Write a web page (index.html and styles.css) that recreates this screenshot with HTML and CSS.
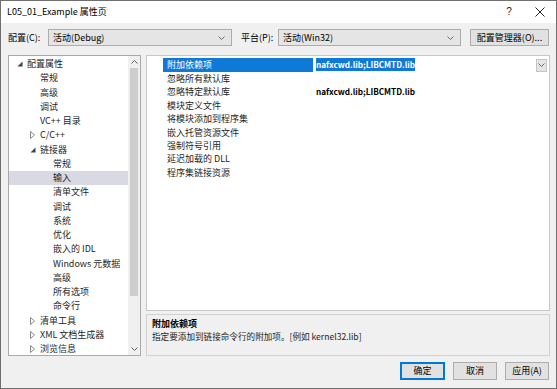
FILE: index.html
```html
<!DOCTYPE html>
<html lang="zh-CN">
<head>
<meta charset="utf-8">
<title>L05_01_Example 属性页</title>
<link rel="stylesheet" href="styles.css">
</head>
<body>
<div class="window">
  <div class="titlebar">
    <span class="title">L05_01_Example 属性页</span>
    <span class="help">?</span>
    <span class="close"><svg width="10" height="10" viewBox="0 0 10 10"><path d="M0.5 0.5L9.5 9.5M9.5 0.5L0.5 9.5" stroke="#222" stroke-width="1" fill="none"/></svg></span>
  </div>

  <div class="config-row">
    <span class="label label-config">配置(C):</span>
    <div class="combo combo-config"><span class="combo-text">活动(Debug)</span><svg class="chev" width="7" height="4" viewBox="0 0 7 4"><path d="M0.5 0.5L3.5 3.5L6.5 0.5" stroke="#6a6a6a" fill="none"/></svg></div>
    <span class="label label-platform">平台(P):</span>
    <div class="combo combo-platform"><span class="combo-text">活动(Win32)</span><svg class="chev" width="7" height="4" viewBox="0 0 7 4"><path d="M0.5 0.5L3.5 3.5L6.5 0.5" stroke="#6a6a6a" fill="none"/></svg></div>
    <div class="btn btn-manager">配置管理器(O)...</div>
  </div>

  <div class="main">
    <div class="tree">
      <ul class="tree-list">
        <li class="node l0"><span class="tog"><svg width="6" height="6" viewBox="0 0 6 6"><path d="M5.5 0.5V5.5H0.5Z" fill="#404040"/></svg></span>配置属性</li>
        <li class="node l1"><span class="tog"></span>常规</li>
        <li class="node l1"><span class="tog"></span>高级</li>
        <li class="node l1"><span class="tog"></span>调试</li>
        <li class="node l1"><span class="tog"></span>VC++ 目录</li>
        <li class="node l1"><span class="tog"><svg width="6" height="8" viewBox="0 0 6 8"><path d="M0.5 0.5L4.5 4L0.5 7.5Z" fill="none" stroke="#8a8a8a"/></svg></span>C/C++</li>
        <li class="node l1"><span class="tog"><svg width="6" height="6" viewBox="0 0 6 6"><path d="M5.5 0.5V5.5H0.5Z" fill="#404040"/></svg></span>链接器</li>
        <li class="node l2"><span class="tog"></span>常规</li>
        <li class="node l2 selected"><span class="tog"></span>输入</li>
        <li class="node l2"><span class="tog"></span>清单文件</li>
        <li class="node l2"><span class="tog"></span>调试</li>
        <li class="node l2"><span class="tog"></span>系统</li>
        <li class="node l2"><span class="tog"></span>优化</li>
        <li class="node l2"><span class="tog"></span>嵌入的 IDL</li>
        <li class="node l2"><span class="tog"></span>Windows 元数据</li>
        <li class="node l2"><span class="tog"></span>高级</li>
        <li class="node l2"><span class="tog"></span>所有选项</li>
        <li class="node l2"><span class="tog"></span>命令行</li>
        <li class="node l1"><span class="tog"><svg width="6" height="8" viewBox="0 0 6 8"><path d="M0.5 0.5L4.5 4L0.5 7.5Z" fill="none" stroke="#8a8a8a"/></svg></span>清单工具</li>
        <li class="node l1"><span class="tog"><svg width="6" height="8" viewBox="0 0 6 8"><path d="M0.5 0.5L4.5 4L0.5 7.5Z" fill="none" stroke="#8a8a8a"/></svg></span>XML 文档生成器</li>
        <li class="node l1"><span class="tog"><svg width="6" height="8" viewBox="0 0 6 8"><path d="M0.5 0.5L4.5 4L0.5 7.5Z" fill="none" stroke="#8a8a8a"/></svg></span>浏览信息</li>
      </ul>
      <div class="scrollbar">
        <div class="sb-arrow"><svg width="7" height="4" viewBox="0 0 7 4"><path d="M0.5 3.5L3.5 0.5L6.5 3.5" stroke="#606060" fill="none"/></svg></div>
        <div class="sb-track"><div class="sb-thumb"></div></div>
        <div class="sb-arrow"><svg width="7" height="4" viewBox="0 0 7 4"><path d="M0.5 0.5L3.5 3.5L6.5 0.5" stroke="#606060" fill="none"/></svg></div>
      </div>
    </div>

    <div class="right">
      <div class="grid">
        <div class="row row-active">
          <span class="name name-selected">附加依赖项</span>
          <span class="value"><span class="sel-text">nafxcwd.lib;LIBCMTD.lib</span></span>
          <span class="dd"><svg width="7" height="4" viewBox="0 0 7 4"><path d="M0.5 0.5L3.5 3.5L6.5 0.5" stroke="#6a6a6a" fill="none"/></svg></span>
        </div>
        <div class="row"><span class="name">忽略所有默认库</span><span class="value"></span></div>
        <div class="row"><span class="name">忽略特定默认库</span><span class="value">nafxcwd.lib;LIBCMTD.lib</span></div>
        <div class="row"><span class="name">模块定义文件</span><span class="value"></span></div>
        <div class="row"><span class="name">将模块添加到程序集</span><span class="value"></span></div>
        <div class="row"><span class="name">嵌入托管资源文件</span><span class="value"></span></div>
        <div class="row"><span class="name">强制符号引用</span><span class="value"></span></div>
        <div class="row"><span class="name">延迟加载的 DLL</span><span class="value"></span></div>
        <div class="row"><span class="name">程序集链接资源</span><span class="value"></span></div>
      </div>
      <div class="desc">
        <div class="desc-title">附加依赖项</div>
        <div class="desc-text">指定要添加到链接命令行的附加项。[例如 kernel32.lib]</div>
      </div>
    </div>
  </div>

  <div class="buttons">
    <div class="btn btn-ok">确定</div>
    <div class="btn btn-cancel">取消</div>
    <div class="btn btn-apply">应用(A)</div>
  </div>
</div>
</body>
</html>
```

FILE: styles.css
```css
* { box-sizing: border-box; }

html, body {
  margin: 0;
  padding: 0;
}

body {
  width: 557px;
  height: 389px;
  overflow: hidden;
  background: #f0f0f0;
  font-family: "Noto Sans CJK SC", "Noto Sans", sans-serif;
  font-size: 9px;
  color: #000;
}

.window {
  width: 557px;
  height: 389px;
  border: 1px solid #6f6f6f;
  background: #f0f0f0;
  display: flex;
  flex-direction: column;
}

/* title bar */
.titlebar {
  flex: none;
  height: 22px;
  background: #fff;
  display: flex;
  align-items: center;
  padding-left: 6px;
}

.title {
  flex: 1;
  font-size: 9px;
  line-height: 22px;
  color: #000;
}

.help {
  width: 30px;
  text-align: center;
  font-size: 10px;
  line-height: 22px;
  color: #222;
  font-family: "Liberation Sans", sans-serif;
}

.close {
  width: 32px;
  height: 22px;
  display: flex;
  align-items: center;
  justify-content: center;
}

/* configuration row */
.config-row {
  flex: none;
  margin-top: 6px;
  height: 17px;
  padding: 0 6px 0 7px;
  display: flex;
  align-items: center;
}

.label {
  line-height: 17px;
}

.label-config { width: 40px; }

.label-platform {
  width: 37px;
  margin-left: 9px;
}

.combo {
  height: 17px;
  background: #e5e5e5;
  border: 1px solid #acacac;
  display: flex;
  align-items: center;
  padding: 0 6px 0 4px;
}

.combo-text {
  flex: 1;
  line-height: 15px;
}

.combo-config { width: 184px; }
.combo-platform { width: 183px; }

.chev { display: block; }

.btn {
  height: 18px;
  background: #e1e1e1;
  border: 1px solid #adadad;
  display: flex;
  align-items: center;
  justify-content: center;
  line-height: 16px;
}

.btn-manager {
  width: 79px;
  height: 17px;
  margin-left: 9px;
}

/* main area */
.main {
  flex: none;
  margin-top: 9px;
  height: 301px;
  padding: 0 6px 0 7px;
  display: flex;
}

.tree {
  width: 133px;
  height: 301px;
  background: #fff;
  border: 1px solid #a9a9a9;
  display: flex;
}

.tree-list {
  flex: 1;
  list-style: none;
  margin: 0;
  padding: 1px 0 0 0;
  overflow: hidden;
}

.node {
  height: 14.25px;
  line-height: 14.25px;
  display: flex;
  align-items: center;
  white-space: nowrap;
  color: #1e1e1e;
}

.node.l0 { padding-left: 5px; }
.node.l1 { padding-left: 18px; }
.node.l2 { padding-left: 31px; }

.node.selected { background: #d9d9e4; }

.tog {
  width: 13px;
  height: 14px;
  flex: none;
  display: flex;
  align-items: center;
  padding-left: 3px;
}

.tog svg { display: block; }

.scrollbar {
  width: 12px;
  flex: none;
  background: #f0f0f0;
  display: flex;
  flex-direction: column;
}

.sb-arrow {
  height: 12px;
  flex: none;
  display: flex;
  align-items: center;
  justify-content: center;
}

.sb-track {
  flex: 1;
  padding: 0 2px;
}

.sb-thumb {
  height: 228px;
  background: #cdcdcd;
}

/* right side */
.right {
  width: 404px;
  margin-left: 5px;
  display: flex;
  flex-direction: column;
}

.grid {
  height: 256px;
  flex: none;
  background: #fff;
  border: 1px solid #c8c8c8;
  padding-top: 2px;
}

.row {
  height: 13.4px;
  line-height: 13.4px;
  display: flex;
  align-items: center;
  white-space: nowrap;
}

.row-active {
  height: 14px;
}

.name {
  width: 150px;
  margin-left: 16px;
  padding-left: 4px;
  flex: none;
  color: #1e1e1e;
}

.name-selected {
  background: #0f79d8;
  color: #fff;
  height: 14px;
  line-height: 14px;
}

.value {
  flex: 1;
  margin-left: 3px;
  font-weight: bold;
  font-size: 8.2px;
  color: #000;
}

.sel-text {
  background: #0f79d8;
  color: #fff;
  display: inline-block;
  line-height: 13px;
}

.dd {
  width: 11px;
  height: 13px;
  margin-right: 2px;
  background: #e5e5e5;
  border: 1px solid #c4c4c4;
  display: flex;
  align-items: center;
  justify-content: center;
}

.desc {
  margin-top: 3px;
  height: 42px;
  flex: none;
  border: 1px solid #d2d2d2;
  background: #f0f0f0;
  padding: 3px 0 0 5px;
}

.desc-title {
  font-weight: bold;
  line-height: 12px;
}

.desc-text {
  line-height: 12px;
  font-size: 8.6px;
  color: #1e1e1e;
}

/* bottom buttons */
.buttons {
  flex: none;
  margin-top: 6px;
  padding-right: 7px;
  display: flex;
  justify-content: flex-end;
  gap: 8px;
}

.btn-ok {
  width: 45px;
  border: 2px solid #0078d7;
}

.btn-cancel,
.btn-apply {
  width: 44px;
}
```
